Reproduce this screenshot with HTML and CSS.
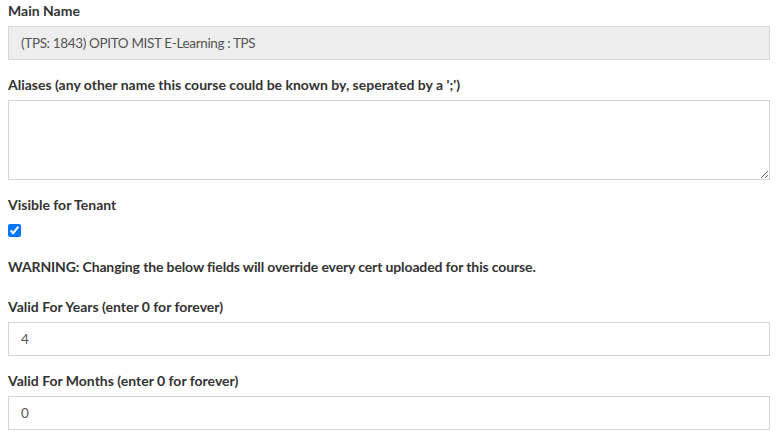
FILE: index.html
```html
<!DOCTYPE html>
<html>
<head>
<meta charset="utf-8">
<link rel="stylesheet" href="styles.css">
</head>
<body>
<div class="form">
  <div class="form-group">
    <label class="label">Main Name</label>
    <input class="form-control" type="text" value="(TPS: 1843) OPITO MIST E-Learning : TPS" disabled>
  </div>
  <div class="form-group">
    <label class="label">Aliases (any other name this course could be known by, seperated by a ';')</label>
    <textarea class="form-control textarea"></textarea>
  </div>
  <div class="form-group">
    <label class="label">Visible for Tenant</label>
    <div class="check-row"><input class="check" type="checkbox" checked></div>
  </div>
  <div class="warning">WARNING: Changing the below fields will override every cert uploaded for this course.</div>
  <div class="form-group">
    <label class="label">Valid For Years (enter 0 for forever)</label>
    <input class="form-control" type="text" value="4">
  </div>
  <div class="form-group">
    <label class="label">Valid For Months (enter 0 for forever)</label>
    <input class="form-control" type="text" value="0">
  </div>
</div>
</body>
</html>
```

FILE: styles.css
```css
html, body {
  margin: 0;
  padding: 0;
  background: #ffffff;
}
body {
  font-family: Lato, "Liberation Sans", sans-serif;
  font-size: 14px;
  line-height: 20px;
  color: #333333;
}
.form {
  padding: 1px 9px 0 8px;
  display: flex;
  flex-direction: column;
}
.form-group {
  display: flex;
  flex-direction: column;
  margin-bottom: 15px;
}
.label {
  display: block;
  font-weight: 700;
  margin-bottom: 5px;
  line-height: 20px;
}
.form-control {
  box-sizing: border-box;
  width: 100%;
  height: 34px;
  margin: 0;
  padding: 6px 12px;
  font-family: inherit;
  font-size: 13.5px;
  letter-spacing: -0.35px;
  line-height: 20px;
  color: #555555;
  background: #ffffff;
  border: 1px solid #d2d6de;
  border-radius: 0;
  outline: none;
}
.form-control:disabled {
  background: #eeeeee;
  color: #555555;
  -webkit-text-fill-color: #555555;
  opacity: 1;
}
.textarea {
  height: 80px;
  resize: both;
  display: block;
}
.check-row {
  height: 20px;
}
.check {
  margin: 4px 0 0 0;
  width: 13px;
  height: 13px;
  display: block;
}
.warning {
  font-weight: 700;
  line-height: 20px;
  letter-spacing: -0.13px;
  margin-top: 2px;
  margin-bottom: 20px;
}
```
